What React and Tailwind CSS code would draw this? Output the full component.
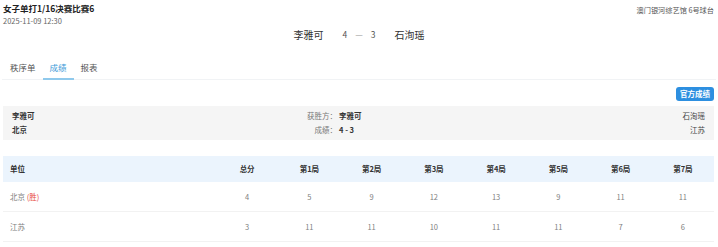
import React from "react";

// match result page – women's singles round of 16
const games = ["第1局", "第2局", "第3局", "第4局", "第5局", "第6局", "第7局"];

const rows = [
  { unit: "北京", win: true, total: 4, scores: [5, 9, 12, 13, 9, 11, 11] },
  { unit: "江苏", win: false, total: 3, scores: [11, 11, 10, 11, 11, 7, 6] },
];

function Tabs() {
  const tabs = ["秩序单", "成绩", "报表"];
  return (
    <div className="mt-[16px] mx-[2px] flex h-[24px] border-b border-[#f1f3f5]">
      {tabs.map((t, i) => (
        <div
          key={t}
          className={`relative px-[7px] h-full flex items-center text-[8.5px] ${
            i === 1 ? "text-[#3d9ad8]" : "text-[#555]"
          } ${i === 0 ? "pl-[8px]" : ""}`}
        >
          {t}
          {i === 1 && (
            <span className="absolute left-0 right-0 bottom-[-1px] h-[2px] bg-[#8fc9ec]" />
          )}
        </div>
      ))}
    </div>
  );
}

function InfoPanel() {
  return (
    <div className="mt-[5px] ml-[3px] mr-[4px] h-[34px] bg-[#f5f5f5] flex pt-[4px] text-[7.5px]">
      <div className="w-[302px] pl-[9px] flex flex-col gap-[2px] font-bold text-[#333]">
        <div className="h-[12px] leading-[12px]">李雅可</div>
        <div className="h-[12px] leading-[12px]">北京</div>
      </div>
      <div className="flex flex-col gap-[2px]">
        <div className="h-[12px] leading-[12px] flex">
          <span className="w-[32px] text-right whitespace-nowrap text-[#777]">获胜方：</span>
          <span className="ml-[2px] font-bold text-[#333]">李雅可</span>
        </div>
        <div className="h-[12px] leading-[12px] flex">
          <span className="w-[32px] text-right whitespace-nowrap text-[#777]">成绩：</span>
          <span className="ml-[2px] font-bold text-[#333]">4 - 3</span>
        </div>
      </div>
      <div className="flex-1 pr-[9px] flex flex-col items-end gap-[2px] text-[#444]">
        <div className="h-[12px] leading-[12px]">石洵瑶</div>
        <div className="h-[12px] leading-[12px]">江苏</div>
      </div>
    </div>
  );
}

function ScoreTable() {
  return (
    <div className="mt-[16px] ml-[3px] mr-[4px] text-[7.5px]">
      <div className="grid grid-cols-[213px_repeat(8,1fr)] h-[26px] items-center bg-[#ebf4fd] font-bold text-[#333]">
        <div className="pl-[7px]">单位</div>
        <div className="text-center">总分</div>
        {games.map((g) => (
          <div key={g} className="text-center">
            {g}
          </div>
        ))}
      </div>
      {rows.map((r) => (
        <div
          key={r.unit}
          className="grid grid-cols-[213px_repeat(8,1fr)] h-[30px] items-center border-b border-[#f2f2f2] text-[#808080]"
        >
          <div className="pl-[7px]">
            {r.unit}
            {r.win && <span className="text-[#e8493f]"> (胜)</span>}
          </div>
          <div className="text-center">{r.total}</div>
          {r.scores.map((s, i) => (
            <div key={i} className="text-center">
              {s}
            </div>
          ))}
        </div>
      ))}
    </div>
  );
}

export default function App() {
  return (
    <div
      className="w-[718px] h-[247px] overflow-hidden bg-white"
      style={{ fontFamily: '"Noto Sans CJK SC", "Noto Sans", sans-serif' }}
    >
      <div className="pt-[2px] pl-[3px] pr-[4px] flex justify-between">
        <div className="h-[12px] leading-[12px] text-[8.5px] font-bold text-[#222]">
          女子单打1/16决赛比赛6
        </div>
        <div className="h-[12px] leading-[12px] pt-[2px] text-[7.2px] text-[#555]">
          澳门银河综艺馆 6号球台
        </div>
      </div>
      <div className="mt-[1px] pl-[3px] h-[12px] leading-[12px] text-[7.5px] text-[#666]">
        2025-11-09 12:30
      </div>

      <div className="mt-[1px] h-[12px] flex items-center justify-center gap-[19px] text-[#333]">
        <span className="text-[10px]">李雅可</span>
        <span className="text-[8.5px] text-[#555] flex items-center gap-[8px]">
          <span>4</span>
          <span className="text-[#999]">—</span>
          <span>3</span>
        </span>
        <span className="text-[10px]">石洵瑶</span>
      </div>

      <Tabs />

      <div className="mt-[7px] pr-[4px] flex justify-end">
        <button className="h-[14px] w-[38px] rounded-[3px] bg-[#2d8fe0] text-white text-[7.5px] font-bold leading-[14px]">
          官方成绩
        </button>
      </div>

      <InfoPanel />
      <ScoreTable />
    </div>
  );
}
